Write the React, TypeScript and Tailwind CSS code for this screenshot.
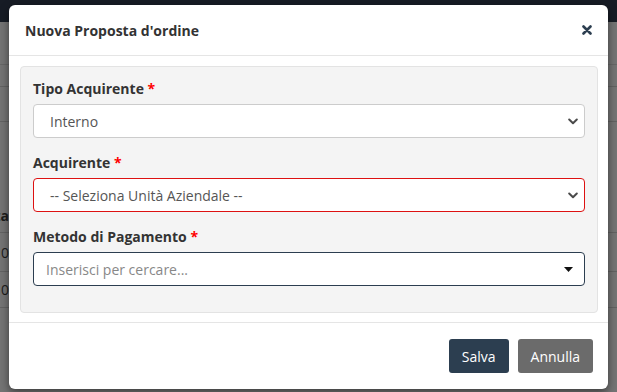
import { ReactNode } from "react"

function Chevron() {
  return (
    <svg width="10" height="7" viewBox="0 0 10 7" className="shrink-0">
      <path d="M1.2 1.5 L5 5.2 L8.8 1.5" fill="none" stroke="#4a4a4a" strokeWidth="2" strokeLinecap="round" strokeLinejoin="round" />
    </svg>
  )
}

function Caret() {
  return (
    <svg width="9" height="5" viewBox="0 0 9 5" className="shrink-0">
      <path d="M0 0 L9 0 L4.5 5 Z" fill="#111" />
    </svg>
  )
}

function Field({ label, children }: { label: string; children: ReactNode }) {
  return (
    <div className="flex flex-col">
      <label className="mb-[5px] text-[14px] leading-[20px] font-bold text-[#333]">
        {label} <span className="text-[#f00]">*</span>
      </label>
      {children}
    </div>
  )
}

export default function App() {
  return (
    <div className="relative h-[392px] w-[617px] overflow-hidden bg-[#747474] font-['Open_Sans',sans-serif]">
      {/* page behind the overlay */}
      <div className="h-[22px] bg-[#171c25]" />
      <div className="flex flex-col">
        <div className="h-[43px] border-b border-[#676767]" />
        <div className="h-[22px] border-b border-[#626262]" />
        <div className="h-[35px] border-b border-[#626262]" />
        <div className="flex h-[111px] items-end border-b border-[#626262] pb-[6px]">
          <div className="flex w-[9px] justify-end overflow-hidden whitespace-nowrap text-[14px] font-bold text-[#1c1c1c]">Data</div>
        </div>
        <div className="flex h-[39px] items-center border-b border-[#626262]">
          <div className="flex w-[9px] justify-end overflow-hidden whitespace-nowrap text-[14px] text-[#1c1c1c]">
            <span className="text-[#1d3e5c]">1</span>0
          </div>
        </div>
        <div className="flex h-[36px] items-center border-b border-[#626262]">
          <div className="flex w-[9px] justify-end overflow-hidden whitespace-nowrap text-[14px] text-[#1c1c1c]">
            <span className="text-[#1d3e5c]">1</span>0
          </div>
        </div>
      </div>

      {/* Modal */}
      <div className="absolute top-[5px] left-[9px] w-[599px] rounded-[6px] bg-white shadow-[0_3px_9px_rgba(0,0,0,0.5)]">
        <div className="flex h-[51px] items-center justify-between border-b border-[#e5e5e5] pr-[15px] pl-[16px]">
          <h4 className="text-[14px] font-bold text-[#333]">Nuova Proposta d'ordine</h4>
          <button className="flex h-[12px] w-[12px] items-center justify-center">
            <svg width="10" height="10" viewBox="0 0 10 10">
              <path d="M1.5 1.5 L8.5 8.5 M8.5 1.5 L1.5 8.5" stroke="#2c3e50" strokeWidth="2.6" strokeLinecap="round" />
            </svg>
          </button>
        </div>

        <div className="pt-[10px] pr-[10px] pb-[9px] pl-[11px]">
          <div className="flex flex-col gap-[15px] rounded-[4px] border border-[#e3e3e3] bg-[#f4f4f4] px-[12px] pt-[12px] pb-[26px]">
            <Field label="Tipo Acquirente">
              <div className="flex h-[34px] items-center justify-between rounded-[4px] border border-[#ccc] bg-white pr-[6px] pl-[16px] text-[14px] text-[#555]">
                <span>Interno</span>
                <Chevron />
              </div>
            </Field>
            <Field label="Acquirente">
              <div className="flex h-[34px] items-center justify-between rounded-[4px] border border-[#dd1111] bg-white pr-[6px] pl-[16px] text-[14px] text-[#555]">
                <span>-- Seleziona Unità Aziendale --</span>
                <Chevron />
              </div>
            </Field>
            <Field label="Metodo di Pagamento">
              <div className="flex h-[34px] items-center justify-between rounded-[4px] border border-[#2c3e50] bg-white pr-[11px] pl-[12px] text-[14px] text-[#888]">
                <span>Inserisci per cercare...</span>
                <Caret />
              </div>
            </Field>
          </div>
        </div>

        <div className="flex justify-end gap-[9px] border-t border-[#e5e5e5] px-[15px] pt-[16px] pb-[16px]">
          <button className="h-[34px] rounded-[3px] bg-[#2c3e50] px-[13px] text-[14px] text-white">Salva</button>
          <button className="h-[34px] rounded-[3px] bg-[#6b6b6b] px-[13px] text-[14px] text-white">Annulla</button>
        </div>
      </div>
    </div>
  )
}
